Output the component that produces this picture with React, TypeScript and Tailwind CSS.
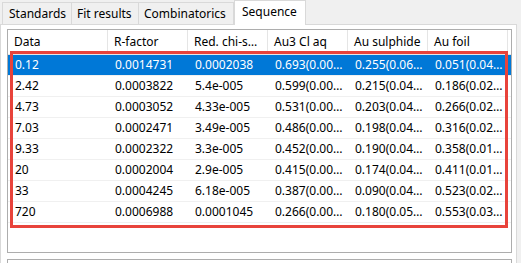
import React from "react";

const rows = [
  ["0.12", "0.0014731", "0.0002038", "0.693(0.00…", "0.255(0.06…", "0.051(0.04…"],
  ["2.42", "0.0003822", "5.4e-005", "0.599(0.00…", "0.215(0.04…", "0.186(0.02…"],
  ["4.73", "0.0003052", "4.33e-005", "0.531(0.00…", "0.203(0.04…", "0.266(0.02…"],
  ["7.03", "0.0002471", "3.49e-005", "0.486(0.00…", "0.198(0.04…", "0.316(0.02…"],
  ["9.33", "0.0002322", "3.3e-005", "0.452(0.00…", "0.190(0.04…", "0.358(0.01…"],
  ["20", "0.0002004", "2.9e-005", "0.415(0.00…", "0.174(0.04…", "0.411(0.01…"],
  ["33", "0.0004245", "6.18e-005", "0.387(0.00…", "0.090(0.04…", "0.523(0.02…"],
  ["720", "0.0006988", "0.0001045", "0.266(0.00…", "0.180(0.05…", "0.553(0.03…"],
];

const headers = ["Data", "R-factor", "Red. chi-s…", "Au3 Cl aq", "Au sulphide", "Au foil"];
const widths = ["w-[100px]", "w-[80px]", "w-[80px]", "w-[80px]", "w-[80px]", "w-[80px]"];

export default function App() {
  return (
    <div
      className="w-[521px] h-[263px] bg-[#f0f0f0] overflow-hidden flex flex-col text-[12px] text-black relative"
      style={{ fontFamily: '"Noto Sans", "Open Sans", sans-serif' }}
    >
      {/* tab bar */}
      <div className="h-[24px] flex items-end pl-[2px] shrink-0 relative z-10">
        <div className="w-[70px] h-[22px] border border-b-0 border-[#d9d9d9] bg-[#f0f0f0] flex items-center pl-[6px] leading-none whitespace-nowrap">Standards</div>
        <div className="w-[67px] h-[22px] border border-b-0 border-l-0 border-[#d9d9d9] bg-[#f0f0f0] flex items-center pl-[5px] leading-none whitespace-nowrap">Fit results</div>
        <div className="w-[95px] h-[22px] border border-b-0 border-l-0 border-[#d9d9d9] bg-[#f0f0f0] flex items-center pl-[5px] leading-none whitespace-nowrap">Combinatorics</div>
        <div className="w-[72px] h-[25px] border border-b-0 border-[#d9d9d9] bg-white flex items-center pl-[7px] pb-[3px] leading-none -mb-[1px] whitespace-nowrap">Sequence</div>
      </div>
      {/* panel */}
      <div className="w-[517px] flex-1 bg-white border border-[#d9d9d9] pt-[4px] pl-[6px] flex flex-col gap-[6px]">
        <div className="w-[505px] h-[224px] border border-[#adadad] flex flex-col shrink-0">
          <div className="h-[25px] flex border-b border-[#e5e5e5] shrink-0">
            {headers.map((h, i) => (
              <div key={i} className={`${widths[i]} h-full border-r border-[#e5e5e5] flex items-center pl-[6px] leading-none whitespace-nowrap overflow-hidden`}>
                {h}
              </div>
            ))}
          </div>
          {rows.map((r, ri) => (
            <div
              key={ri}
              className={`h-[21px] flex border-b border-[#f0f0f0] shrink-0 ${ri === 0 ? "bg-[#0078d7] text-white" : ""}`}
            >
              {r.map((c, ci) => (
                <div key={ci} className={`${widths[ci]} h-full flex items-center pl-[7px] leading-none whitespace-nowrap overflow-hidden`}>
                  {c}
                </div>
              ))}
            </div>
          ))}
        </div>
        <div className="w-[505px] h-[20px] border border-[#adadad] shrink-0"></div>
      </div>
      {/* red annotation */}
      <div className="absolute left-[10px] top-[51px] w-[498px] h-[177px] border-[3px] border-[#e8433b] pointer-events-none"></div>
    </div>
  );
}
